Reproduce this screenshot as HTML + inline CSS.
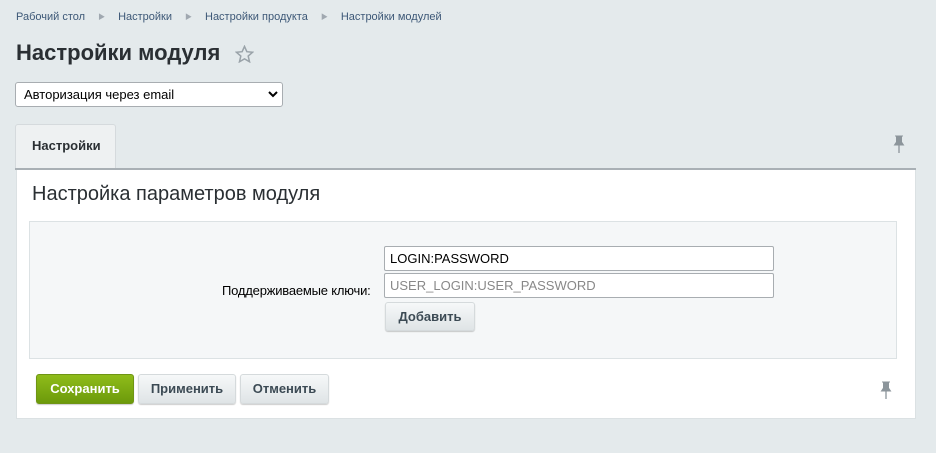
<!DOCTYPE html>
<html><head><meta charset="utf-8"><style>
body{margin:0;width:936px;height:453px;background:#e4eaec;font-family:"Liberation Sans","Noto Sans CJK SC",sans-serif;position:relative;overflow:hidden}
.a{position:absolute}
.bc{top:11px;left:16px;font-size:11px;color:#3d5877}
.bc span.s{display:inline-block;margin:0 13px;color:#a0a8b0;font-size:7px;vertical-align:1px}
h1{position:absolute;margin:0;top:40px;left:16px;font-size:22px;font-weight:bold;color:#2a2f33}
.sel{left:15px;top:82px;width:268px;height:25px;border:1px solid #a8adb1;border-radius:3px;background:#fff;font-size:13px;box-sizing:border-box;padding:4px 8px;color:#000}
.tab{left:15px;top:124px;width:101px;height:46px;background:#eef1f2;border:1px solid #d5dadd;border-bottom:none;border-radius:3px 3px 0 0;box-sizing:border-box;font-size:13px;font-weight:bold;color:#2a2f33;padding:13px 0 0 16px}
.line{left:15px;top:168px;width:901px;height:2px;background:#a9b0b5}
.panel{left:16px;top:170px;width:900px;height:249px;background:#fff;border:1px solid #dbe1e3;border-top:none;box-sizing:border-box}
.h2{left:32px;top:183px;font-size:20px;color:#2a2f33}
.inner{left:29px;top:221px;width:868px;height:138px;background:#f5f7f8;border:1px solid #dce2e4;box-sizing:border-box}
.inp{left:384px;width:390px;height:25px;border:1px solid #a8adb1;border-radius:2px;background:#fff;box-sizing:border-box;font-size:13px;padding:4px 5px}
.btn{height:30px;border-radius:3px;box-sizing:border-box;font-size:13px;font-weight:bold;text-align:center;line-height:28px;color:#3c4a54;background:linear-gradient(#f6f8f9,#dfe4e6);border:1px solid #d5dadc;box-shadow:0 1px 1px rgba(0,0,0,.2)}
</style></head><body>
<div class="a bc">Рабочий стол<span class="s">▶</span>Настройки<span class="s">▶</span>Настройки продукта<span class="s">▶</span>Настройки модулей</div>
<h1>Настройки модуля</h1>
<svg class="a" style="left:235px;top:45px" width="19" height="18" viewBox="0 0 20 19"><path d="M10 1.5l2.5 5.6 6 .6-4.6 4 1.4 6L10 14.6 4.7 17.7l1.4-6-4.6-4 6-.6z" fill="none" stroke="#9aa3a9" stroke-width="1.6"/></svg>
<div class="a sel">Авторизация через email</div>
<svg class="a" style="left:268px;top:90px" width="10" height="8" viewBox="0 0 10 8"><path d="M1 2l4 4 4-4" fill="none" stroke="#000" stroke-width="2"/></svg>
<div class="a tab">Настройки</div>
<div class="a line"></div>
<div class="a panel"></div>
<svg class="a" style="left:893px;top:135px" width="12" height="18" viewBox="0 0 12 18"><path d="M2 1h8M3.5 1v6L1.5 10h9L8.5 7V1z" fill="#8c959b" stroke="#8c959b"/><path d="M6 10v8" stroke="#8c959b" stroke-width="1.3"/></svg>
<div class="a h2">Настройка параметров модуля</div>
<div class="a inner"></div>
<div class="a" style="left:222px;top:283px;font-size:13px;color:#000;width:153px;white-space:nowrap;letter-spacing:-0.2px">Поддерживаемые ключи:</div>
<div class="a inp" style="top:246px;color:#000">LOGIN:PASSWORD</div>
<div class="a inp" style="top:273px;color:#888">USER_LOGIN:USER_PASSWORD</div>
<div class="a btn" style="left:385px;top:302px;width:90px;height:29px;line-height:27px">Добавить</div>
<div class="a btn" style="left:36px;top:374px;width:98px;color:#fff;background:linear-gradient(#8fbc1a,#6c9a0b);border-color:#6f9514">Сохранить</div>
<div class="a btn" style="left:138px;top:374px;width:98px">Применить</div>
<div class="a btn" style="left:240px;top:374px;width:89px">Отменить</div>
<svg class="a" style="left:880px;top:381px" width="12" height="18" viewBox="0 0 12 18"><path d="M2 1h8M3.5 1v6L1.5 10h9L8.5 7V1z" fill="#8c959b" stroke="#8c959b"/><path d="M6 10v8" stroke="#8c959b" stroke-width="1.3"/></svg>
</body></html>
